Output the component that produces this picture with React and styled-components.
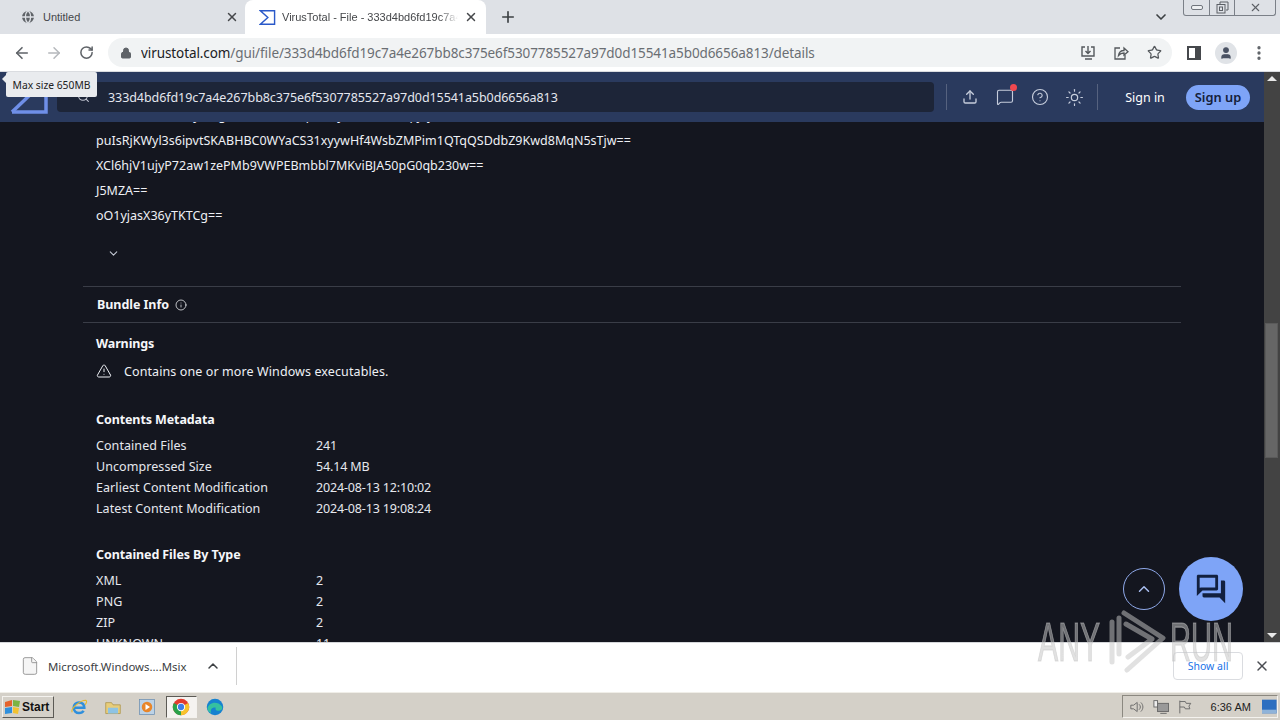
import React from "react";
import styled, { createGlobalStyle } from "styled-components";
import { ArrowLeft, ArrowRight, RotateCw, Lock, Star, X, Plus, ChevronDown, ChevronUp, Search, Upload, CircleHelp, Sun, Info, TriangleAlert, MessageSquare, Globe, File, EllipsisVertical, User } from "lucide-react";

const Global = createGlobalStyle`
  html, body { margin: 0; padding: 0; height: 100%; overflow: hidden; }
  body { font-family: "Noto Sans", "Liberation Sans", sans-serif; }
  * { box-sizing: border-box; }
`;
const Screen = styled.div`
  position: relative; width: 1280px; height: 720px; display: flex; flex-direction: column; overflow: hidden; background: #fff;
`;
const TabStrip = styled.div`
  height: 34px; flex: none; background: #dee1e6; display: flex; align-items: stretch; padding-left: 8px; position: relative;
`;
const Tab = styled.div`
  width: ${p => p.$w}px; flex: none; display: flex; align-items: center; gap: ${p => p.$active ? 6 : 7}px; padding: 0 ${p => p.$active ? 8 : 6}px 0 ${p => p.$active ? 14 : 12}px;
  background: ${p => p.$active ? "#fff" : "transparent"}; border-radius: 8px 8px 0 0; color: #45474a;
  font: 11px "Liberation Sans", sans-serif;
`;
const TabTitle = styled.span`
  flex: 1; overflow: hidden; white-space: nowrap;
  ${p => p.$fade && "mask-image: linear-gradient(to right, #000 90%, transparent 100%);"}
`;
const NewTab = styled.div`
  width: 44px; display: flex; align-items: center; justify-content: center; color: #3c4043;
`;
const TabMenu = styled.div`
  margin-left: auto; margin-right: 111px; display: flex; align-items: center; color: #3c4043;
`;
const WinControls = styled.div`
  position: absolute; right: 4px; top: 0; width: 93px; height: 16px; border: 1px solid #7b8088; border-top: 0; border-radius: 0 0 3px 3px; display: grid; grid-template-columns: 25px 25px 1fr; background: #dee1e6;
`;
const WinButton = styled.div`
  display: flex; align-items: center; justify-content: center; border-left: ${p => p.$first ? "0" : "1px solid #7b8088"}; color: #5c6066;
`;
const MinGlyph = styled.span`
  width: 12px; height: 5px; border: 1px solid #70757c; border-radius: 2px; background: #eef0f2;
`;
const Toolbar = styled.div`
  height: 38px; flex: none; background: #fff; display: flex; align-items: center; padding: 0 6px 0 6px; border-bottom: 1px solid #dadce0;
`;
const NavButton = styled.div`
  width: 32px; height: 28px; display: flex; align-items: center; justify-content: center; color: ${p => p.$off ? "#b5b8bc" : "#5f6368"};
`;
const Omnibox = styled.div`
  margin-left: 6px; width: 1064px; flex: none; height: 29px; border-radius: 15px; background: #f1f3f4; display: flex; align-items: center; padding: 0 2px 0 12px; gap: 9px; color: #5f6368;
`;
const Url = styled.div`
  flex: 1; font-size: 13.5px; letter-spacing: -0.09px; white-space: nowrap; overflow: hidden; color: #6a6e73;
  strong { font-weight: 400; color: #202124; }
`;
const OmniIcons = styled.div`
  display: flex; align-items: center; gap: 1px;
`;
const OmniIcon = styled.div`
  width: 32px; display: flex; justify-content: center; color: #54585c;
`;
const PanelGlyph = styled.div`
  margin-left: 15px; width: 14px; height: 14px; border: 2px solid #45484c; border-right-width: 6px;
`;
const Avatar = styled.div`
  margin-left: 14px; width: 22px; height: 22px; border-radius: 50%; background: #e0e3e7; display: flex; align-items: center; justify-content: center; color: #4a5263;
`;
const Kebab = styled.div`
  margin-left: 13px; color: #5f6368; display: flex;
`;
const Page = styled.div`
  flex: none; height: 570px; display: flex; background: #14161f;
`;
const Viewport = styled.div`
  flex: 1; min-width: 0; display: flex; flex-direction: column;
`;
const Header = styled.header`
  height: 50px; flex: none; background: #2a3a5e; display: flex; align-items: center; padding: 0 14px 0 8px; position: relative; z-index: 2;
`;
const Logo = styled.svg`
  flex: none; width: 49px; height: 50px;
`;
const SearchBox = styled.div`
  width: 877px; height: 30px; border-radius: 4px; background: #1d2538; display: flex; align-items: center; color: #e4e7ef; font-size: 12.5px; padding-left: 51px; letter-spacing: -0.07px; position: relative;
`;
const SearchIcon = styled.span`
  position: absolute; left: 20px; top: 8px; color: #c4c8d4; display: flex;
`;
const Divider = styled.span`
  width: 1px; height: 26px; background: #56627f; margin: ${p => p.$m};
`;
const HeadIcon = styled.div`
  width: 35px; display: flex; justify-content: center; color: #c6cddc; position: relative;
`;
const Dot = styled.span`
  position: absolute; right: 5px; top: -4px; width: 7px; height: 7px; border-radius: 50%; background: #f0484f;
`;
const SignIn = styled.span`
  color: #fff; font-size: 12.5px; width: 62px; margin-left: 16px; text-align: center;
`;
const SignUp = styled.span`
  margin-left: 10px; width: 64px; height: 25px; border-radius: 13px; background: #7ea4f7; color: #14203a; font-size: 12.8px; font-weight: 600; display: flex; align-items: center; justify-content: center;
`;
const Content = styled.main`
  flex: 1; overflow: hidden; color: #fff; font-size: 12.5px; padding: 0 83px 0 83px;
`;
const Inner = styled.div`
  margin-top: -19px; display: flex; flex-direction: column;
`;
const HashRow = styled.div`
  height: 25px; line-height: 25px; padding-left: 13px; white-space: nowrap; color: #eef0f5;
`;
const Chevron = styled.div`
  height: 21px; padding-left: 24px; margin: 15px 0 22px; color: #c3c8d3; display: flex; align-items: center;
`;
const SectionBar = styled.div`
  height: 37px; border-top: 1px solid #3a3d47; border-bottom: 1px solid #3a3d47; display: flex; align-items: center; padding-left: 14px; gap: 6px; font-weight: 700; font-size: 12.5px; letter-spacing: -0.05px; color: #f4f5f8;
`;
const Body = styled.div`
  padding: 0 0 0 13px; display: flex; flex-direction: column;
`;
const Title = styled.h3`
  margin: ${p => p.$top}px 0 ${p => p.$bottom}px; font-size: 12.5px; font-weight: 700; line-height: 17px; letter-spacing: -0.1px; color: #f6f7fa;
`;
const Warn = styled.div`
  display: flex; align-items: center; gap: 12px; height: 20px; color: #eef0f5; letter-spacing: 0.1px;
`;
const Row = styled.div`
  display: grid; grid-template-columns: 220px 1fr; height: 21px; line-height: 21px; color: #e6e8ee;
`;
const RowLabel = styled.span`
  letter-spacing: 0.07px;
`;
const RowValue = styled.span`
  letter-spacing: -0.16px;
`;
const Scrollbar = styled.aside`
  width: 16px; flex: none; background: #434343; display: flex; flex-direction: column; align-items: center; justify-content: space-between; position: relative; padding: 4px 0;
`;
const Thumb = styled.div`
  position: absolute; left: 1px; right: 2px; top: 251px; height: 135px; background: #666; border: 1px solid #5a5a5a;
`;
const Arrow = styled.span`
  width: 0; height: 0; border-left: 5px solid transparent; border-right: 5px solid transparent;
  ${p => p.$up ? "border-bottom: 5px solid #e8e8e8;" : "border-top: 5px solid #e8e8e8;"}
`;
const Tooltip = styled.div`
  position: absolute; left: 6px; top: 72px; width: 91px; height: 25px; background: #e9ebee; color: #222; font-size: 10.3px; display: flex; align-items: center; justify-content: center; border-radius: 2px; z-index: 5;
  &::before { content: ""; position: absolute; left: -4px; top: 3px; border-right: 4px solid #e9ebee; border-top: 4px solid transparent; border-bottom: 4px solid transparent; }
`;
const ToTop = styled.div`
  position: absolute; left: 1123px; top: 568px; width: 42px; height: 42px; border-radius: 50%; border: 1px solid #8fa9ea; display: flex; align-items: center; justify-content: center; color: #a9bef0; z-index: 3;
`;
const Chat = styled.div`
  position: absolute; left: 1179px; top: 557px; width: 64px; height: 64px; border-radius: 50%; background: #7ea4f7; display: flex; align-items: center; justify-content: center; z-index: 3;
`;
const DownloadBar = styled.div`
  height: 50px; flex: none; background: #fff; display: flex; align-items: center; padding: 0 10px 3px 0; border-top: 1px solid #d5d7da;
`;
const DownloadItem = styled.div`
  width: 237px; height: 38px; display: flex; align-items: center; padding-left: 20px; border-right: 1px solid #d0d0d0; color: #3c4043; font-size: 11.4px; gap: 8px;
`;
const FileName = styled.span`
  width: 149px; white-space: nowrap;
`;
const ShowAll = styled.div`
  margin-left: auto; width: 70px; height: 28px; border: 1px solid #dadce0; border-radius: 4px; color: #1a73e8; font-size: 10.5px; display: flex; align-items: center; justify-content: center; background: #fff;
`;
const CloseBar = styled.div`
  margin-left: 11px; color: #4a4d52; display: flex;
`;
const Taskbar = styled.div`
  height: 28px; flex: none; background: #d4d0c8; border-top: 1px solid #f0eee8; display: flex; align-items: center; padding-left: 2px;
`;
const StartButton = styled.div`
  width: 52px; height: 22px; border: 1px solid; border-color: #f4f2ee #5c5a55 #5c5a55 #f4f2ee; display: flex; align-items: center; gap: 0; padding-left: 1px; font: 700 12px "Liberation Sans", sans-serif; color: #111;
`;
const Quick = styled.div`
  margin-left: 8px; display: grid; grid-template-columns: repeat(5, 34px); align-items: center; justify-items: center;
`;
const QuickSlot = styled.div`
  width: 25px; height: 22px; display: flex; align-items: center; justify-content: center;
  ${p => p.$active && "background: #f5f3f0; border: 1px solid; border-color: #5c5a55 #f4f2ee #f4f2ee #5c5a55; width: 31px;"}
`;
const Tray = styled.div`
  margin-left: auto; width: 156px; height: 23px; margin-right: 2px; border: 1px solid; border-color: #8b8880 #f4f2ee #f4f2ee #8b8880; display: flex; align-items: center; padding-left: 6px; gap: 9px; color: #555; font: 11px "Liberation Sans", sans-serif;
`;
const Clock = styled.span`
  margin-left: 9px; color: #222; width: 47px; white-space: nowrap;
`;
const Watermark = styled.div`
  position: absolute; left: 1038px; top: 610px; display: flex; align-items: center; pointer-events: none; z-index: 4; color: rgba(198,198,198,.52); filter: blur(.4px);
`;
const WatermarkWord = styled.span`
  width: ${p => p.$w}px; height: 62px; display: block; font: 56px/62px "Liberation Sans", sans-serif; -webkit-text-stroke: 1.2px rgba(198,198,198,.52); white-space: nowrap; transform: scaleX(${p => p.$sx}); transform-origin: left center;
`;
const WatermarkMark = styled.svg`
  flex: none; margin: 0 4px 0 8px;
`;

const Sigma = ({ size = 18, color = "#2a59c9", w = 2 }) => (
  <svg width={size} height={size} viewBox="0 0 24 24" fill="none" stroke={color} strokeWidth={w}>
    <path d="M2 2.5H22V21.5H2L12.5 12Z" strokeLinejoin="miter" />
  </svg>
);
const ChatGlyph = () => (
  <svg width="34" height="34" viewBox="0 0 24 24" fill="#12203f">
    <path d="M21 6h-2v9H6v2c0 .55.45 1 1 1h11l4 4V7c0-.55-.45-1-1-1zm-4 6V3c0-.55-.45-1-1-1H3c-.55 0-1 .45-1 1v14l4-4h10c.55 0 1-.45 1-1zM4 11.2V4h11v7H5.2z" />
  </svg>
);
const Windows = () => (
  <svg width="18" height="16" viewBox="0 0 18 16">
    <path d="M1 3l7-2v6l-7 1z" fill="#e4622c" /><path d="M9 1l7 1-1 6-6-1z" fill="#7cb342" /><path d="M1 9l7-1v6l-7 1z" fill="#2f8fdc" /><path d="M9 8l6 1-1 6-5-1z" fill="#f2c230" />
  </svg>
);
const ChromeLogo = () => (
  <svg width="18" height="18" viewBox="0 0 24 24">
    <circle cx="12" cy="12" r="11" fill="#e33b2e" />
    <path d="M12 12 21.5 6.5A11 11 0 0 1 12 23Z" fill="#f7c32c" />
    <path d="M12 12 12 23A11 11 0 0 1 2.5 6.5Z" fill="#2aa24a" />
    <circle cx="12" cy="12" r="5.5" fill="#fff" /><circle cx="12" cy="12" r="4.2" fill="#3f7ee8" />
  </svg>
);
const EdgeLogo = () => (
  <svg width="18" height="18" viewBox="0 0 24 24">
    <circle cx="12" cy="12" r="11" fill="#1682d0" />
    <path d="M2 14C3 6 15 3 21 11c2 4-1 6-5 6-3 0-4-2-3-4-4-1-8 2-6 7C4 19 2 17 2 14Z" fill="#35c1a0" />
  </svg>
);
const IeLogo = () => (
  <svg width="18" height="18" viewBox="0 0 24 24" fill="none">
    <path d="M5 13h14c0-5-3-7-7-7s-7 3-7 7 3 7 7 7c3 0 5-1 6-3" stroke="#2f8fdc" strokeWidth="3.500" />
    <path d="M3 19C0 14 14 3 21 3c2 1 1 4-1 6" stroke="#e5b92e" strokeWidth="1.5" />
  </svg>
);
const FolderLogo = () => (
  <svg width="18" height="16" viewBox="0 0 24 22">
    <path d="M2 5h8l2 3h10v12H2z" fill="#e8cd7a" stroke="#a98f43" /><path d="M5 12h14v8H5z" fill="#8ec3e3" />
  </svg>
);
const MediaLogo = () => (
  <svg width="18" height="18" viewBox="0 0 24 24">
    <rect x="2" y="2" width="20" height="20" fill="#bcd2e6" stroke="#6c8fb1" /><circle cx="12" cy="12" r="7" fill="#e8862a" /><path d="M10 8l6 4-6 4z" fill="#fff" />
  </svg>
);
const BrandMark = () => (
  <WatermarkMark width="58" height="64" viewBox="0 0 58 64" fill="none" stroke="currentColor" strokeWidth="5" strokeLinecap="round" strokeLinejoin="round">
    <path d="M4 12V52" />
    <path d="M11 8V44" />
    <path d="M16 3 55 28 19 60" />
    <path d="M18 14 44 29 20 47" />
  </WatermarkMark>
);

const hashes = [
  "x4AmsbmRFw7oyvTsg1nQ_wL9bhTqRrhdy8zXoTVaQ1pj1jwk1Q==",
  "puIsRjKWyl3s6ipvtSKABHBC0WYaCS31xyywHf4WsbZMPim1QTqQSDdbZ9Kwd8MqN5sTjw==",
  "XCl6hjV1ujyP72aw1zePMb9VWPEBmbbl7MKviBJA50pG0qb230w==",
  "J5MZA==",
  "oO1yjasX36yTKTCg==",
];
const meta = [
  ["Contained Files", "241"],
  ["Uncompressed Size", "54.14 MB"],
  ["Earliest Content Modification", "2024-08-13 12:10:02"],
  ["Latest Content Modification", "2024-08-13 19:08:24"],
];
const types = [["XML", "2"], ["PNG", "2"], ["ZIP", "2"], ["UNKNOWN", "11"]];

export default function App() {
  return (
    <Screen>
      <Global />
      <TabStrip>
        <Tab $w={237}>
          <Globe size={16} fill="#5f6368" color="#dee1e6" />
          <TabTitle>Untitled</TabTitle>
          <X size={14} strokeWidth={2.5} />
        </Tab>
        <Tab $w={241} $active>
          <Sigma size={17} />
          <TabTitle $fade>VirusTotal - File - 333d4bd6fd19c7a4e267</TabTitle>
          <X size={14} strokeWidth={2.5} />
        </Tab>
        <NewTab><Plus size={18} strokeWidth={2.2} /></NewTab>
        <TabMenu><ChevronDown size={16} strokeWidth={2.5} /></TabMenu>
        <WinControls>
          <WinButton $first><MinGlyph /></WinButton>
          <WinButton><svg width="13" height="13" viewBox="0 0 13 13" fill="none" stroke="#5c6066"><rect x="1" y="3.5" width="8" height="8.5" /><rect x="3.5" y="6" width="3" height="3.500" /><path d="M4 3V1h8v8h-2" /></svg></WinButton>
          <WinButton><X size={13} strokeWidth={2} /></WinButton>
        </WinControls>
      </TabStrip>
      <Toolbar>
        <NavButton><ArrowLeft size={18} strokeWidth={2.2} /></NavButton>
        <NavButton $off><ArrowRight size={18} /></NavButton>
        <NavButton><RotateCw size={15} strokeWidth={2.4} /></NavButton>
        <Omnibox>
          <Lock size={12} fill="#5f6368" />
          <Url><strong>virustotal.com</strong>/gui/file/333d4bd6fd19c7a4e267bb8c375e6f5307785527a97d0d15541a5b0d6656a813/details</Url>
          <OmniIcons>
            <OmniIcon><svg width="16" height="16" viewBox="0 0 16 16" fill="none" stroke="#54585c" strokeWidth="1.4"><path d="M5 2H2v9h12V2h-3M8 1v7M5.5 6 8 8.5 10.500 6M5 14h7" /></svg></OmniIcon>
            <OmniIcon><svg width="16" height="16" viewBox="0 0 16 16" fill="none" stroke="#54585c" strokeWidth="1.3"><path d="M7 3H2v11h10v-4" /><path d="M5.500 10.500C6 7 8.500 5.500 11 5.500V3l4 3.700-4 3.300V8C9 8 7 8.700 5.500 10.500Z" /></svg></OmniIcon>
            <OmniIcon><Star size={15} strokeWidth={2} /></OmniIcon>
          </OmniIcons>
        </Omnibox>
        <PanelGlyph />
        <Avatar><User size={14} fill="#4a5263" /></Avatar>
        <Kebab><EllipsisVertical size={18} strokeWidth={2.4} /></Kebab>
      </Toolbar>
      <Page>
        <Viewport>
          <Header>
            <Logo viewBox="0 0 49 50" fill="none" stroke="#6f8fe8" strokeWidth="3.500"><path d="M4 40H38V3" /><path d="M4 40 24 21" /></Logo>
            <SearchBox>
              <SearchIcon><Search size={13} /></SearchIcon>
              333d4bd6fd19c7a4e267bb8c375e6f5307785527a97d0d15541a5b0d6656a813
            </SearchBox>
            <Divider $m="0 5px 0 12px" />
            <HeadIcon><Upload size={16} /></HeadIcon>
            <HeadIcon><MessageSquare size={18} strokeWidth={1.5} /><Dot /></HeadIcon>
            <HeadIcon><CircleHelp size={18} strokeWidth={1.5} /></HeadIcon>
            <HeadIcon><Sun size={19} strokeWidth={1.5} /></HeadIcon>
            <Divider $m="0 0 0 5px" />
            <SignIn>Sign in</SignIn>
            <SignUp>Sign up</SignUp>
          </Header>
          <Content>
            <Inner>
              {hashes.map(h => <HashRow key={h}>{h}</HashRow>)}
              <Chevron><ChevronDown size={13} /></Chevron>
              <SectionBar>Bundle Info <Info size={12} strokeWidth={1.5} /></SectionBar>
              <Body>
                <Title $top={12} $bottom={9}>Warnings</Title>
                <Warn><TriangleAlert size={16} strokeWidth={1.5} />Contains one or more Windows executables.</Warn>
                <Title $top={30} $bottom={7}>Contents Metadata</Title>
                {meta.map(([k, v]) => <Row key={k}><RowLabel>{k}</RowLabel><RowValue>{v}</RowValue></Row>)}
                <Title $top={27} $bottom={7}>Contained Files By Type</Title>
                {types.map(([k, v]) => <Row key={k}><RowLabel>{k}</RowLabel><RowValue>{v}</RowValue></Row>)}
              </Body>
            </Inner>
          </Content>
        </Viewport>
        <Scrollbar>
          <Arrow $up />
          <Thumb />
          <Arrow />
        </Scrollbar>
      </Page>
      <DownloadBar>
        <DownloadItem>
          <File size={20} strokeWidth={1} fill="#f5f5f5" color="#888" />
          <FileName>Microsoft.Windows....Msix</FileName>
          <ChevronUp size={16} strokeWidth={2.2} />
        </DownloadItem>
        <ShowAll>Show all</ShowAll>
        <CloseBar><X size={16} strokeWidth={2.2} /></CloseBar>
      </DownloadBar>
      <Taskbar>
        <StartButton><Windows />Start</StartButton>
        <Quick>
          <QuickSlot><IeLogo /></QuickSlot>
          <QuickSlot><FolderLogo /></QuickSlot>
          <QuickSlot><MediaLogo /></QuickSlot>
          <QuickSlot $active><ChromeLogo /></QuickSlot>
          <QuickSlot><EdgeLogo /></QuickSlot>
        </Quick>
        <Tray>
          <svg width="16" height="16" viewBox="0 0 16 16" fill="none" stroke="#666"><path d="M2 6h3l4-3v10l-4-3H2zM11 5c2 2 2 4 0 6M13 3c3 3 3 7 0 10" /></svg>
          <svg width="18" height="16" viewBox="0 0 18 16" fill="none" stroke="#666"><rect x="5" y="4" width="12" height="9" fill="#999" /><rect x="1" y="1" width="4" height="7" fill="#eee" /><path d="M8 15h7" /></svg>
          <svg width="16" height="16" viewBox="0 0 16 16" fill="none" stroke="#666"><path d="M2 1v14M2 2h6l1 2h5l-2 3 1 3H8L7 8H2" /></svg>
          <Clock>6:36 AM</Clock>
          <svg width="16" height="15" viewBox="0 0 16 15"><rect width="16" height="15" fill="#2d6fc0" /><rect y="11" width="16" height="4" fill="#8fb3d9" /></svg>
        </Tray>
      </Taskbar>
      <Tooltip>Max size 650MB</Tooltip>
      <ToTop><ChevronUp size={18} /></ToTop>
      <Chat><ChatGlyph /></Chat>
      <Watermark>
        <WatermarkWord $w={62} $sx={0.54}>ANY</WatermarkWord>
        <BrandMark />
        <WatermarkWord $w={62} $sx={0.52}>RUN</WatermarkWord>
      </Watermark>
    </Screen>
  );
}
